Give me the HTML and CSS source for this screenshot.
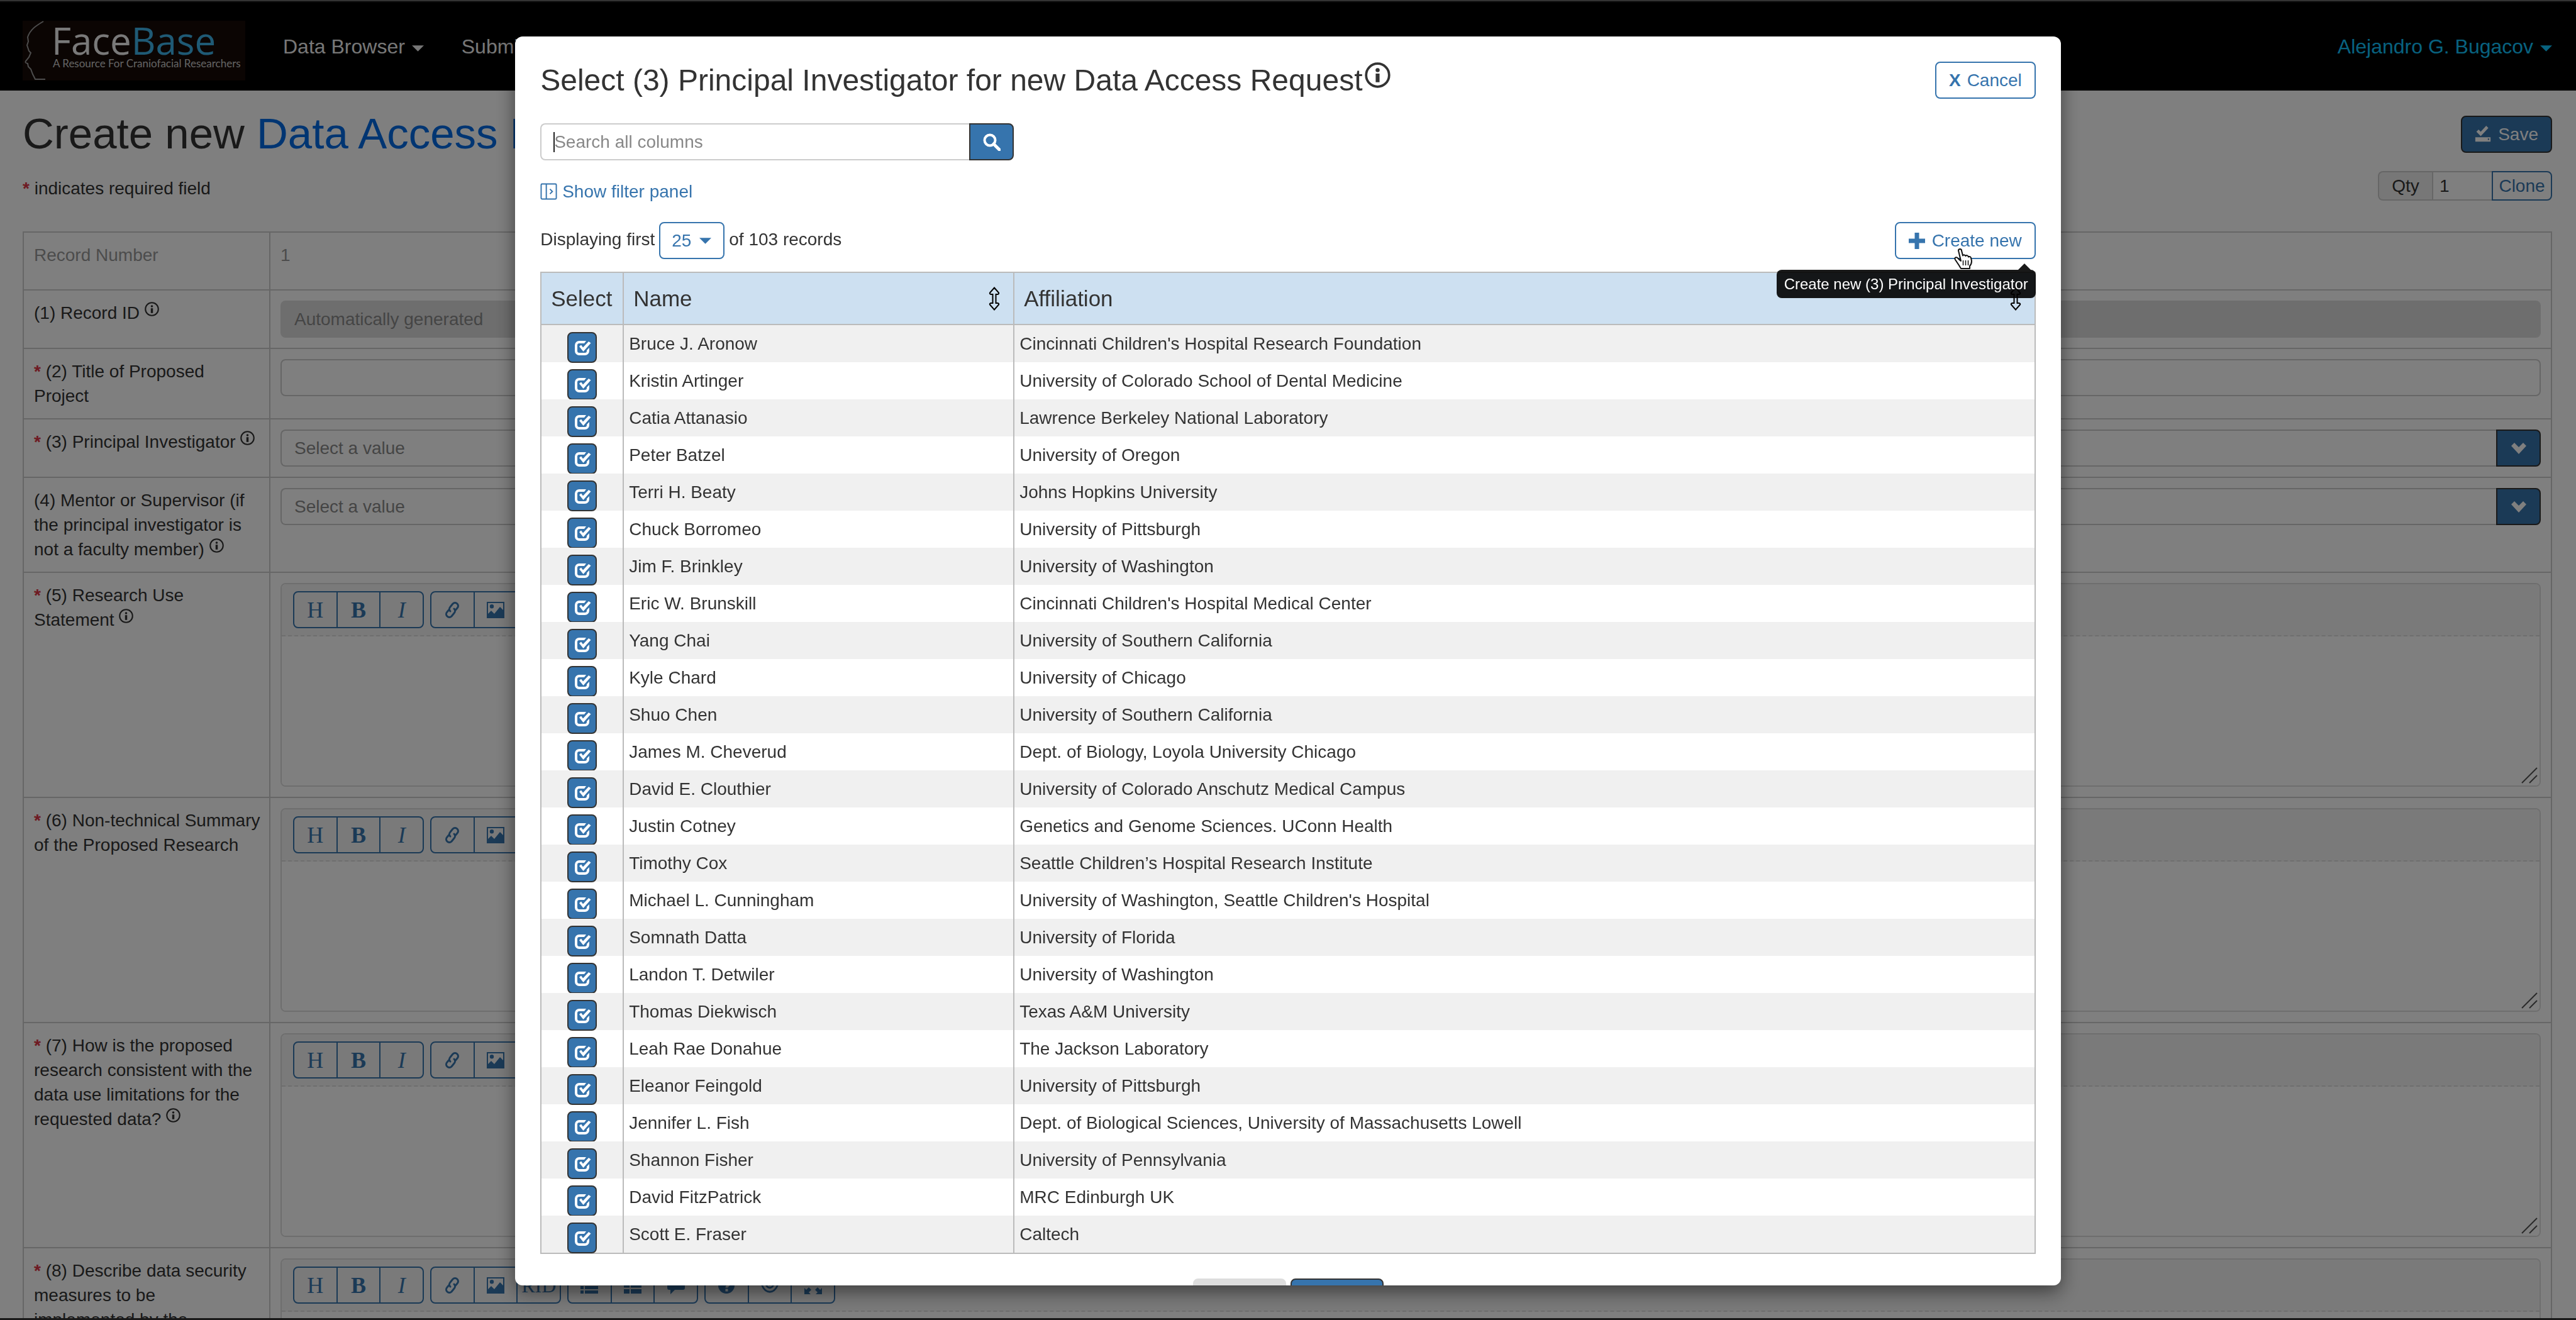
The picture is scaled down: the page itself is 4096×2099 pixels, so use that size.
FILE: index.html
```html
<!DOCTYPE html>
<html lang="en">
<head>
<meta charset="utf-8">
<title>FaceBase: Create new Data Access Request</title>
<link rel="stylesheet" href="styles.css">
</head>
<body>
<svg class="sprite" aria-hidden="true">
  <symbol id="i-info" viewBox="0 0 24 24"><circle cx="12" cy="12" r="10.7" fill="none" stroke="currentColor" stroke-width="2.2"/><circle cx="12" cy="7.3" r="1.9"/><path d="M10.2 10.6h3.6v8h-3.6z"/></symbol>
  <symbol id="i-caret" viewBox="0 0 20 10"><path d="M0 0h20L10 10z"/></symbol>
  <symbol id="i-check" viewBox="0 0 28 28"><path d="M20 3H9a7 7 0 0 0-7 7v9a7 7 0 0 0 7 7h9a7 7 0 0 0 7-7v-5l-4 4v1a3 3 0 0 1-3 3H9a3 3 0 0 1-3-3v-9a3 3 0 0 1 3-3h8z"/><path d="M9 12l3-2.500 3 4L24 4l3.500 2.500L15.500 20z"/></symbol>
  <symbol id="i-down" viewBox="0 0 28 28"><path d="M2 10l5-5 7 7 7-7 5 5-12 13z"/></symbol>
  <symbol id="i-sort" viewBox="0 0 18 38"><path d="M9 1.500L16 9.500c.600 1.500-.500 2.500-2 2.500h-2.500v14H14c1.500 0 2.600 1 2 2.500L9 36.500 2 28.500c-.600-1.500.500-2.500 2-2.500h2.500V12H4c-1.500 0-2.600-1-2-2.500z" fill="none" stroke="currentColor" stroke-width="2"/></symbol>
  <symbol id="i-link" viewBox="0 0 28 28"><g fill="none" stroke="currentColor" stroke-width="3" stroke-linecap="round"><path d="M11 16c-2-2-2-5 0-7l4-5c2-2 5-2 7 0s2 5 0 7l-3 3.500"/><path d="M17 12c2 2 2 5 0 7l-4 5c-2 2-5 2-7 0s-2-5 0-7l3-3.500"/></g></symbol>
  <symbol id="i-image" viewBox="0 0 28 26"><path fill-rule="evenodd" d="M0 0h28v26H0zM2 2v17l5-5 5 5 9-11 5 5V2zM8 4a3.200 3.200 0 1 1 0 6.400A3.200 3.200 0 0 1 8 4z"/></symbol>
  <symbol id="i-list" viewBox="0 0 28 26"><path d="M0 0h5v5H0zM7 0h21v5H7zM0 7h5v5H0zM7 7h21v5H7zM0 14h5v5H0zM7 14h21v5H7zM0 21h5v5H0zM7 21h21v5H7z"/></symbol>
  <symbol id="i-olist" viewBox="0 0 28 26"><path d="M0 0h9v7H0zM11 0h17v7H11zM0 9.500h9v7H0zM11 9.500h17v7H11zM0 19h9v7H0zM11 19h17v7H11z"/></symbol>
  <symbol id="i-comment" viewBox="0 0 28 28"><path d="M2 2h24q2 0 2 2v14q0 3-3 3H12l-7 7v-7H3q-3 0-3-3V4q0-2 2-2z"/></symbol>
  <symbol id="i-help" viewBox="0 0 28 28"><path fill-rule="evenodd" d="M14 1a13 13 0 1 1 0 26 13 13 0 0 1 0-26zM8 11h4q0-3 2.500-3T17 10.500q0 1.500-2.500 3-2 1.500-2 4h4q0-1 2-2.500 2.500-2 2.500-4.500 0-5-6.500-5T8 11zM12.500 19.500v4h4v-4z"/></symbol>
  <symbol id="i-eye" viewBox="0 0 30 28"><path d="M1 12Q14-2 29 12 Q24 25 15 25T1 12z" fill="none" stroke="currentColor" stroke-width="3"/><circle cx="15" cy="12" r="6" fill="none" stroke="currentColor" stroke-width="3"/><circle cx="15" cy="12" r="2.500"/></symbol>
  <symbol id="i-full" viewBox="0 0 28 28"><path d="M0 0h10L7 3l4 4-4 4-4-4-3 3zM28 0H18l3 3-4 4 4 4 4-4 3 3zM0 28h10l-3-3 4-4-4-4-4 4-3-3zM28 28H18l3-3-4-4 4-4 4 4 3-3z"/></symbol>
  <symbol id="i-grip" viewBox="0 0 28 28"><path d="M2 26L26 2M14 26l12-12" fill="none" stroke="currentColor" stroke-width="2"/></symbol>
</svg>

<header class="topbar">
  <a class="logo" href="#" aria-label="FaceBase">
    <svg class="logo-face" viewBox="0 0 40 95" aria-hidden="true"><path d="M33 1C21 8 12 14 8 26l1 7-2 6 3 9 3 3-3 7-5 6q-2 3 3 4l1 5 4 4 3 8 4 8h16" fill="none" stroke="#9a9a9a" stroke-width="2"/></svg>
    <span class="logo-text"><span class="logo-name">Face<b>Base</b></span><span class="logo-tag">A Resource For Craniofacial Researchers</span></span>
  </a>
  <nav class="nav">
    <a href="#">Data Browser <svg class="caret"><use href="#i-caret"/></svg></a>
    <a href="#">Submitting Data</a>
  </nav>
  <a class="user" href="#">Alejandro G. Bugacov <svg class="caret"><use href="#i-caret"/></svg></a>
</header>

<main class="page">
  <div class="page-head">
    <h1>Create new <a href="#">Data Access Request</a></h1>
    <button class="btn btn-solid save" type="button"><svg class="ico" viewBox="0 0 28 30"><path fill-rule="evenodd" d="M2 11l4-4 4 4L20 0l4 4-14 15zM0 21h28v8H0zM23 23.500v2.500h2.500v-2.500z"/></svg>Save</button>
  </div>
  <div class="page-sub">
    <p><span class="req">*</span> indicates required field</p>
    <div class="clone"><label for="qty">Qty</label><input id="qty" type="text" value="1"><button type="button">Clone</button></div>
  </div>
  <table class="form">
    <colgroup><col class="c-label"><col></colgroup>
    <tbody>
      <tr class="muted"><th scope="row">Record Number</th><td class="num">1</td></tr>
      <tr><th scope="row"><label for="f1">(1) Record ID <svg class="info"><use href="#i-info"/></svg></label></th><td><input class="field" id="f1" disabled placeholder="Automatically generated"></td></tr>
      <tr><th scope="row"><label for="f2"><span class="req">*</span> (2) Title of Proposed<br>Project</label></th><td><input class="field" id="f2"></td></tr>
      <tr><th scope="row"><label for="f3"><span class="req">*</span> (3) Principal Investigator <svg class="info"><use href="#i-info"/></svg></label></th><td><div class="picker"><input class="field" id="f3" placeholder="Select a value"><button type="button" aria-label="Choose investigator"><svg><use href="#i-down"/></svg></button></div></td></tr>
      <tr><th scope="row"><label for="f4">(4) Mentor or Supervisor (if the principal investigator is not a faculty member) <svg class="info"><use href="#i-info"/></svg></label></th><td><div class="picker"><input class="field" id="f4" placeholder="Select a value"><button type="button" aria-label="Choose mentor"><svg><use href="#i-down"/></svg></button></div></td></tr>
      <tr><th scope="row"><label for="f5"><span class="req">*</span> (5) Research Use Statement <svg class="info"><use href="#i-info"/></svg></label></th><td><div class="editor" data-field="f5"></div></td></tr>
      <tr><th scope="row"><label for="f6"><span class="req">*</span> (6) Non-technical Summary of the Proposed Research</label></th><td><div class="editor" data-field="f6"></div></td></tr>
      <tr><th scope="row"><label for="f7"><span class="req">*</span> (7) How is the proposed research consistent with the data use limitations for the requested data? <svg class="info"><use href="#i-info"/></svg></label></th><td><div class="editor" data-field="f7"></div></td></tr>
      <tr><th scope="row"><label for="f8"><span class="req">*</span> (8) Describe data security measures to be<br>implemented by the</label></th><td><div class="editor" data-field="f8"></div></td></tr>
    </tbody>
  </table>
</main>

<div class="backdrop">
  <section class="modal" role="dialog" aria-labelledby="modal-title">
    <div class="modal-head">
      <h2 id="modal-title">Select (3) Principal Investigator for new Data Access Request<svg><use href="#i-info"/></svg></h2>
      <button class="btn btn-line" type="button"><b>X</b> Cancel</button>
    </div>
    <div class="search">
      <input type="text" aria-label="Search all columns" placeholder="Search all columns"><span class="text-cursor"></span>
      <button type="button" aria-label="Search"><svg viewBox="0 0 28 28"><circle cx="11" cy="11" r="8.500" fill="none" stroke="currentColor" stroke-width="4"/><path d="M17 17l9 9" stroke="currentColor" stroke-width="5" stroke-linecap="round"/></svg></button>
    </div>
    <a class="filter" href="#"><svg viewBox="0 0 28 28"><path d="M3 1.500h22q1.500 0 1.500 1.500v22q0 1.500-1.500 1.500H3Q1.500 26.500 1.500 25V3Q1.500 1.500 3 1.500zM10 2v24M16 10l4 4-4 4" fill="none" stroke="currentColor" stroke-width="2"/></svg>Show filter panel</a>
    <div class="toolbar">
      <div class="count">
        <label for="size">Displaying first</label>
        <span class="size"><select id="size"><option>25</option></select><svg class="caret"><use href="#i-caret"/></svg></span>
        <span class="of">of 103 records</span>
      </div>
      <div class="create">
        <button class="btn btn-line" type="button"><svg class="ico" viewBox="0 0 26 26"><path d="M9.500 0h7v9.500H26v7h-9.500V26h-7v-9.500H0v-7h9.500z"/></svg>Create new</button>
        <svg class="hand" viewBox="0 0 30 34"><path d="M11 20L7 3.500Q7 1 9.500 1T12 3.500l2 8q1-2 3.500-.5l1 1q2-2 4 .5l.5 1q3-1.500 4 1.500l1 5q0 5-3 8v4H11l-3-5-6-9q-1.500-2.500.5-3.500t4 1.500l2 2z" fill="#fff" stroke="#111" stroke-width="2" stroke-linejoin="round"/><path d="M14.500 19v8M18.500 19v8M22.500 19v8" stroke="#111" stroke-width="1.500"/></svg>
        <div class="tip" role="tooltip">Create new (3) Principal Investigator</div>
      </div>
    </div>
    <table class="records">
      <colgroup><col class="c-select"><col class="c-name"><col></colgroup>
      <thead><tr><th scope="col">Select</th><th scope="col"><div>Name<svg><use href="#i-sort"/></svg></div></th><th scope="col"><div>Affiliation<svg><use href="#i-sort"/></svg></div></th></tr></thead>
      <tbody id="rows"></tbody>
    </table>
    <div class="pager"><button type="button" aria-label="Previous" disabled></button><button type="button" aria-label="Next"></button></div>
  </section>
</div>
<script src="app.js"></script>
</body>
</html>
```
FILE: styles.css
```css
* { box-sizing: border-box; }
html, body { height: 100%; }
body { display: flex; flex-direction: column; margin: 0; overflow: hidden; background: #fff; color: #333; font: 28px/39px "Liberation Sans", Arial, sans-serif; border-bottom: 3px solid #333; }
h1, h2, p { margin: 0; font-weight: 400; }
a { color: #006ae4; text-decoration: none; }
button, input, select, textarea { font: inherit; color: inherit; margin: 0; }
button { cursor: pointer; }
svg { fill: currentColor; }
.sprite { display: none; }
.caret { width: 19px; height: 10px; }

.topbar { display: flex; flex: none; align-items: flex-start; height: 144px; padding: 29px 38px 0 36px; background: #000; border-top: 4px ridge #666; font-size: 32px; color: #eee; }
.logo { display: flex; width: 354px; height: 95px; background: #160a06; color: #f2f2f2; }
.logo-face { width: 40px; height: 95px; flex: none; }
.logo-text { display: flex; flex-direction: column; padding: 6px 0 0 6px; }
.logo-name { font: 60px/50px "Open Sans", sans-serif; }
.logo-name b { font-weight: 400; color: #3fb4ea; }
.logo-tag { margin-top: 2px; padding-left: 2px; font: 17px/20px Lato, sans-serif; color: #c8c8c8; white-space: nowrap; }
.nav { display: flex; gap: 60px; padding: 22px 0 0 60px; }
.nav a { color: #eee; white-space: nowrap; }
.nav .caret, .user .caret { margin-left: 2px; vertical-align: 3px; }
.user { margin-left: auto; padding-top: 22px; color: #10c4ff; }

.page { flex: 1; min-height: 0; overflow: hidden; padding: 30px 38px 0 36px; }
.page-head { display: flex; justify-content: space-between; align-items: center; }
h1 { font-size: 69px; line-height: 78px; white-space: nowrap; }
.page-sub { display: flex; justify-content: space-between; align-items: flex-end; margin: 20px 0 49px; }
.req { color: #dc3545; font-weight: 700; }
.btn { display: flex; align-items: center; height: 59px; padding: 0 20px; border: 2px solid; border-radius: 8px; white-space: nowrap; }
.btn .ico { width: 26px; height: 26px; margin-right: 11px; }
.btn-solid { background: #3674ad; color: #fff; border-color: #333; }
.btn-line { background: #fff; color: #3674ad; border-color: #3674ad; }
.clone { display: flex; height: 47px; }
.clone label { width: 86px; border: 2px solid #ccc; border-right: 0; border-radius: 8px 0 0 8px; background: #eee; text-align: center; line-height: 43px; }
.clone input { width: 95px; padding: 0 10px; border: 2px solid #ccc; border-right: 0; background: #fff; }
.clone button { width: 96px; padding: 0; border: 2px solid #3674ad; border-radius: 0 8px 8px 0; background: #fff; color: #3674ad; }

.form { width: 100%; table-layout: fixed; border-collapse: collapse; }
.c-label { width: 392px; }
.form th, .form td { height: 92px; padding: 16px; border: 2px solid #ccc; vertical-align: top; text-align: left; font-weight: 400; }
.form th { padding-right: 8px; }
.muted { color: #999; }
.info { width: 23px; height: 23px; vertical-align: 4px; overflow: visible; }
.field { display: block; width: 100%; height: 59px; padding: 0 20px; border: 2px solid #ccc; border-radius: 8px; background: #fff; }
.field::placeholder { color: #8a8a8a; opacity: 1; }
.field:disabled { background: #ddd; border-color: #ddd; }
.picker { display: flex; }
.picker .field { flex: 1; border-right: 0; border-radius: 8px 0 0 8px; }
.picker button { display: grid; place-items: center; width: 71px; padding: 0; border: 2px solid #333; border-radius: 0 8px 8px 0; background: #3674ad; color: #fff; }
.picker svg { width: 28px; height: 28px; }
.editor { position: relative; display: flex; flex-direction: column; height: 324px; border: 2px solid #ddd; border-radius: 8px; overflow: hidden; }
.tools { display: flex; gap: 10px; padding: 11px 18px; background: #f5f5f5; border-bottom: 2px dashed #ddd; }
.tools div { display: flex; width: 208px; height: 59px; border: 2px solid #3674ad; border-radius: 8px; }
.tools button { flex: 1; display: grid; place-items: center; padding: 0; border: 0; background: none; color: #3674ad; font: 36px/40px "Liberation Serif", serif; }
.tools button + button { border-left: 2px solid #3674ad; }
.tools svg { width: 28px; height: 28px; }
.tools .rid { font-size: 32px; }
.editor textarea { flex: 1; border: 0; resize: none; background: #fff; }
.grip { position: absolute; right: 2px; bottom: 2px; width: 28px; height: 28px; color: #555; }

.backdrop { position: fixed; inset: 0; padding: 58px 20% 55px; background: rgba(0, 0, 0, .5); }
.modal { height: 100%; padding: 40px 40px 0; overflow: hidden; background: #fff; border-radius: 12px; box-shadow: 0 10px 30px rgba(0, 0, 0, .5); }
.modal-head { display: flex; justify-content: space-between; }
h2 { font-size: 48px; line-height: 59px; white-space: nowrap; }
h2 svg { width: 41px; height: 41px; vertical-align: 4px; margin: -9px 0 0 4px; overflow: visible; }
.modal-head b { margin-right: 10px; }
.search { position: relative; display: flex; width: 753px; height: 59px; margin-top: 39px; }
.search input { flex: 1; min-width: 0; padding: 0 20px; border: 2px solid #ccc; border-right: 0; border-radius: 8px 0 0 8px; background: #fff; }
.search input::placeholder { color: #888; opacity: 1; }
.text-cursor { position: absolute; left: 21px; top: 14px; width: 2px; height: 32px; background: #222; }
.search button { display: grid; place-items: center; width: 71px; padding: 0; border: 2px solid #333; border-radius: 0 8px 8px 0; background: #3674ad; color: #fff; }
.search button svg { width: 28px; height: 28px; }
.filter { display: flex; align-items: center; gap: 8px; margin-top: 30px; color: #3674ad; }
.filter svg { width: 27px; height: 27px; }
.toolbar { display: flex; justify-content: space-between; margin: 29px 0 20px; }
.count { display: flex; align-items: center; gap: 7px; }
.count label, .of { padding-bottom: 4px; }
.size { display: grid; align-items: center; color: #3674ad; }
.size select { grid-area: 1 / 1; width: 104px; height: 59px; padding: 0 18px; border: 2px solid #3674ad; border-radius: 8px; background: #fff; appearance: none; }
.size .caret { grid-area: 1 / 1; justify-self: end; margin-right: 21px; pointer-events: none; }
.create { position: relative; }
.hand { position: absolute; left: 94px; top: 42px; width: 30px; height: 34px; z-index: 3; }
.tip { position: absolute; right: 0; top: 76px; z-index: 2; height: 45px; padding: 0 12px; border-radius: 8px; background: rgba(0, 0, 0, .9); color: #fff; font-size: 24px; line-height: 45px; white-space: nowrap; }
.tip::before { content: ""; position: absolute; right: 8px; bottom: 100%; border: 10px solid transparent; border-top: 0; border-bottom-color: rgba(0, 0, 0, .9); }

.records { width: 100%; table-layout: fixed; border-collapse: separate; border-spacing: 0; border: 2px solid #bbb; border-left: 0; }
.c-select { width: 131px; }
.c-name { width: 621px; }
.records th { height: 83px; padding: 0 15px; border-left: 2px solid #bbb; border-bottom: 2px solid #bbb; background: #cde0f1; font-size: 35px; font-weight: 400; text-align: left; }
.records th div { display: flex; justify-content: space-between; align-items: center; }
.records th svg { width: 18px; height: 38px; margin-right: 6px; color: #000; }
.records td { height: 59px; padding: 10px 8px; border-left: 2px solid #bbb; vertical-align: top; white-space: nowrap; }
.records td:first-child { padding: 11px 0 0; }
.records tbody tr:nth-child(odd) { background: #f0f0f0; }
.pick { display: grid; place-items: center; width: 47px; height: 49px; margin: 0 auto -1px; padding: 0; border: 2px solid #333; border-radius: 8px; background: #3674ad; color: #fff; }
.pick svg { width: 28px; height: 28px; }
.pager { display: flex; justify-content: center; gap: 7px; margin-top: 39px; }
.pager button { width: 148px; height: 59px; border: 2px solid #333; border-radius: 8px; background: #3674ad; }
.pager button:disabled { background: #ddd; border-color: #ddd; }
```
FILE: app.js
```js
const people = [
  ["Bruce J. Aronow", "Cincinnati Children's Hospital Research Foundation"],
  ["Kristin Artinger", "University of Colorado School of Dental Medicine"],
  ["Catia Attanasio", "Lawrence Berkeley National Laboratory"],
  ["Peter Batzel", "University of Oregon"],
  ["Terri H. Beaty", "Johns Hopkins University"],
  ["Chuck Borromeo", "University of Pittsburgh"],
  ["Jim F. Brinkley", "University of Washington"],
  ["Eric W. Brunskill", "Cincinnati Children's Hospital Medical Center"],
  ["Yang Chai", "University of Southern California"],
  ["Kyle Chard", "University of Chicago"],
  ["Shuo Chen", "University of Southern California"],
  ["James M. Cheverud", "Dept. of Biology, Loyola University Chicago"],
  ["David E. Clouthier", "University of Colorado Anschutz Medical Campus"],
  ["Justin Cotney", "Genetics and Genome Sciences. UConn Health"],
  ["Timothy Cox", "Seattle Children’s Hospital Research Institute"],
  ["Michael L. Cunningham", "University of Washington, Seattle Children's Hospital"],
  ["Somnath Datta", "University of Florida"],
  ["Landon T. Detwiler", "University of Washington"],
  ["Thomas Diekwisch", "Texas A&M University"],
  ["Leah Rae Donahue", "The Jackson Laboratory"],
  ["Eleanor Feingold", "University of Pittsburgh"],
  ["Jennifer L. Fish", "Dept. of Biological Sciences, University of Massachusetts Lowell"],
  ["Shannon Fisher", "University of Pennsylvania"],
  ["David FitzPatrick", "MRC Edinburgh UK"],
  ["Scott E. Fraser", "Caltech"]
];

const icon = (id) => `<svg><use href="#i-${id}"/></svg>`;

const body = document.getElementById("rows");
for (const [name, place] of people) {
  const row = body.insertRow();
  row.insertCell().innerHTML = `<button class="pick" type="button">${icon("check")}</button>`;
  row.querySelector("button").setAttribute("aria-label", "Select " + name);
  row.insertCell().textContent = name;
  row.insertCell().textContent = place;
}

const button = (label, content, cls = "") =>
  `<button type="button" class="${cls}" aria-label="${label}">${content}</button>`;

for (const editor of document.querySelectorAll(".editor")) {
  editor.innerHTML = `<div class="tools">
    <div>${button("Heading", "H")}${button("Bold", "<b>B</b>")}${button("Italic", "<i>I</i>")}</div>
    <div>${button("Link", icon("link"))}${button("Image", icon("image"))}${button("RID", "RID", "rid")}</div>
    <div>${button("List", icon("list"))}${button("Ordered list", icon("olist"))}${button("Comment", icon("comment"))}</div>
    <div>${button("Help", icon("help"))}${button("Preview", icon("eye"))}${button("Fullscreen", icon("full"))}</div>
  </div>
  <textarea id="${editor.dataset.field}"></textarea>
  <svg class="grip"><use href="#i-grip"/></svg>`;
}
```
